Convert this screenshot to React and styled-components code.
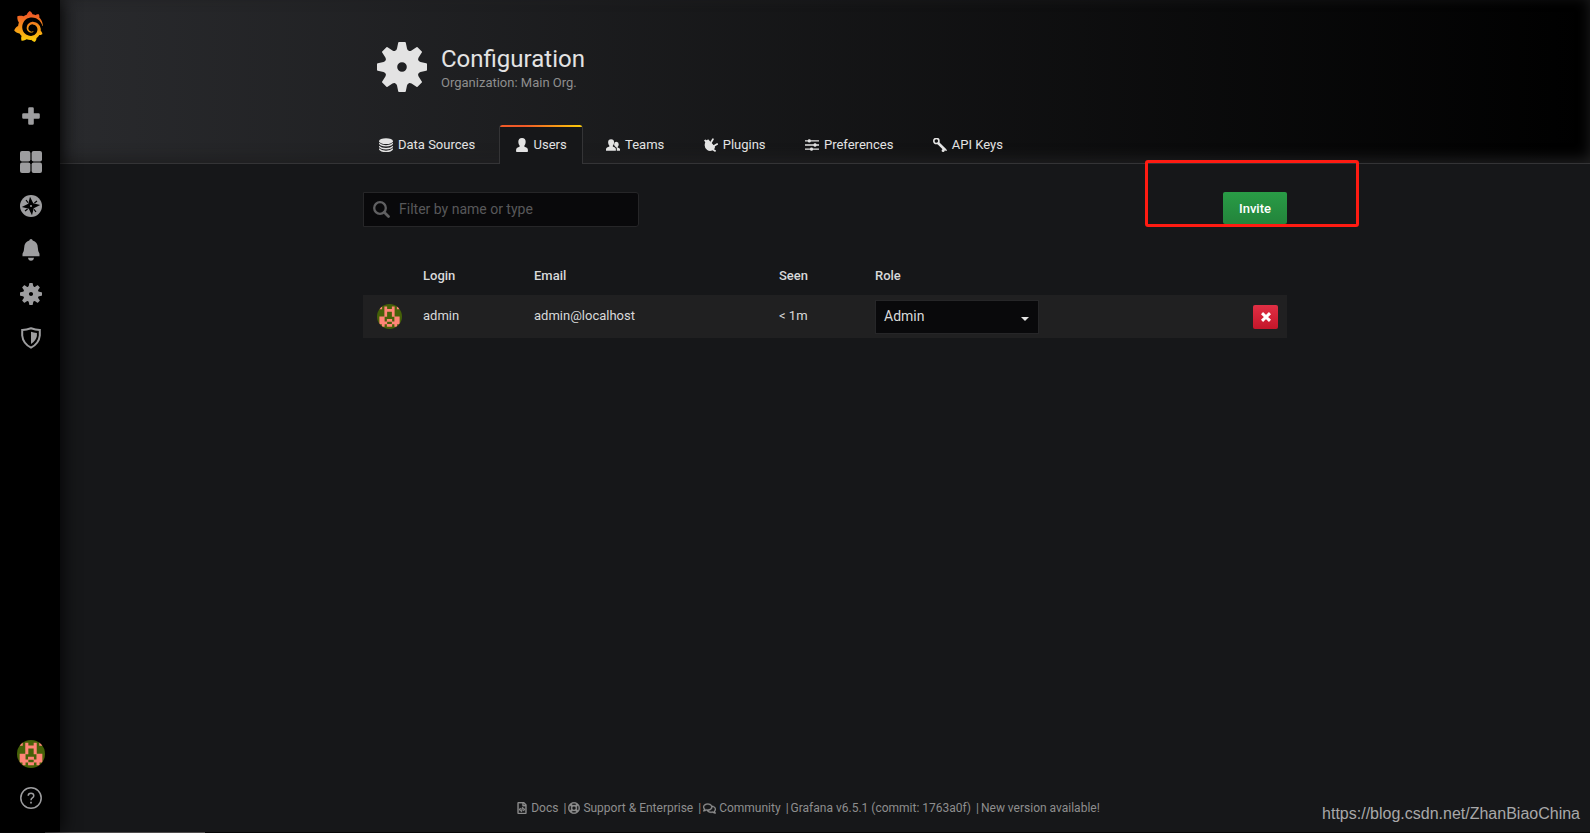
import styled, { createGlobalStyle, css } from "styled-components";
import { SiGrafana } from "react-icons/si";
import { FaRegFileCode, FaRegLifeRing, FaRegComments } from "react-icons/fa";

const GlobalStyle = createGlobalStyle`
  * {
    box-sizing: border-box;
  }
  body {
    margin: 0;
    background: #161719;
    color: #d8d9da;
    font-family: Roboto, "Liberation Sans", sans-serif;
    font-size: 13px;
    line-height: 20px;
    overflow: hidden;
  }
`;

const Page = styled.div`
  display: grid;
  grid-template-rows: 1fr 1px;
  height: 833px;
`;
const Shell = styled.div`
  display: flex;
  min-height: 0;
`;
const BottomEdge = styled.div`
  padding-left: 45px;
  background: #060607;

  &::before {
    content: "";
    display: block;
    width: 160px;
    height: 1px;
    background: #4d4b4c;
  }
`;

const Sidebar = styled.nav`
  position: relative;
  z-index: 1;
  display: flex;
  flex-direction: column;
  flex: none;
  width: 60px;
  padding: 11px 0 12px;
  background: #000;
  box-shadow: 0 0 20px #000;
  color: #9d9d9f;
`;
const Brand = styled.div`
  height: 85px;
  padding-left: 13px;

  svg {
    display: block;
  }
`;
const SideItem = styled.a`
  display: flex;
  align-items: center;
  justify-content: center;
  width: 62px;
  height: 44px;
  margin-top: ${({ $last }) => ($last ? "auto" : 0)};
`;

const Main = styled.main`
  display: flex;
  flex-direction: column;
  flex: 1;
  min-width: 0;
`;
const Container = styled.div`
  width: 924px;
  margin: 0 auto;
`;

const Header = styled.header`
  height: 164px;
  border-bottom: 1px solid #343436;
  background: linear-gradient(90deg, #292a2d, black);
  box-shadow: inset 0 -4px 14px #1f1f20;
  color: #e3e3e3;
`;
const Heading = styled.div`
  display: flex;
  height: 125px;
  padding: 42px 0 0 14px;
  gap: 14px;
`;
const Title = styled.h1`
  margin: 3px 0 0;
  font-size: 24px;
  font-weight: 400;
  line-height: 29px;
`;
const SubTitle = styled.div`
  color: #8e8e8e;
  line-height: 18px;
`;
const Tabs = styled.div`
  display: flex;
  gap: 7.4px;
`;
const Tab = styled.a`
  display: flex;
  align-items: center;
  height: 39px;
  padding: 0 15px 1px;
  border: 1px solid transparent;
  border-bottom: 0;
  border-radius: 3px 3px 0 0;

  svg {
    width: 14px;
    height: 14px;
    margin-right: 5px;
  }

  ${({ $active }) =>
    $active &&
    css`
      border-color: #343436;
      border-top: 0;
      padding-top: 1px;
      background: linear-gradient(to right, #f05a28 30%, #fbca0a 99%) top / 100% 2px no-repeat #161719;
    `}
`;

const Toolbar = styled.div`
  display: flex;
  justify-content: space-between;
  align-items: flex-start;
  margin-top: 28px;
`;
const Filter = styled.label`
  display: flex;
  align-items: center;
  width: 276px;
  height: 35px;
  padding-left: 9px;
  gap: 9px;
  border: 1px solid #262628;
  border-radius: 0 3px 3px 0;
  background: #09090b;
  color: #606062;

  input {
    flex: 1;
    min-width: 0;
    padding: 0 0 2px;
    border: 0;
    outline: 0;
    background: none;
    color: #d8d9da;
    font: 14px Roboto, sans-serif;
  }
  input::placeholder {
    color: #58585a;
    opacity: 1;
  }
`;
const Button = styled.button`
  display: flex;
  align-items: center;
  justify-content: center;
  width: ${({ $danger }) => ($danger ? "25px" : "64px")};
  height: ${({ $danger }) => ($danger ? "24px" : "32px")};
  padding: 0;
  border: 0;
  border-radius: 2px;
  background: ${({ $danger }) =>
    $danger ? "linear-gradient(#e02f44, #c4162a)" : "linear-gradient(#299c46, #23843b)"};
  color: #fff;
  font: 500 13px Roboto, sans-serif;
`;

const Table = styled.div`
  margin-top: 38px;
`;
const Row = styled.div`
  display: grid;
  grid-template-columns: 60px 111px 245px 96px 1fr 25px;
  align-items: center;
  height: ${({ $head }) => ($head ? "30px" : "43px")};
  padding-right: 9px;
  padding-bottom: ${({ $head }) => ($head ? "6px" : 0)};
  background: ${({ $head }) => ($head ? "none" : "#202021")};
  font-weight: ${({ $head }) => ($head ? 500 : 400)};
`;
const Cell = styled.div`
  padding-bottom: 2px;
`;
const AvatarCell = styled.div`
  display: flex;
  padding-left: 14px;
`;
const Select = styled.div`
  display: flex;
  align-items: center;
  justify-content: space-between;
  width: 164px;
  height: 34px;
  padding: 0 9px 1px 8px;
  border: 1px solid #262628;
  background: #09090b;
  font-size: 14px;
`;
const Caret = styled.i`
  margin-top: 5px;
  border: 4px solid transparent;
  border-top-color: #e3e3e3;
  border-bottom: 0;
`;

const Footer = styled.footer`
  display: flex;
  justify-content: center;
  margin-top: auto;
  padding: 0 34px 14px 0;
  color: #8e8e8e;
  font-size: 12px;
`;
const FooterItem = styled.a`
  display: flex;
  align-items: center;
  white-space: pre;

  svg {
    margin-right: 3px;
    stroke: currentColor;
    stroke-width: 14px;
  }
  & + &::before {
    content: "|";
    margin: 0 2px 0 5px;
  }
`;

// marker drawn on top of the page
const Highlight = styled.div`
  position: absolute;
  z-index: 2;
  top: 160px;
  left: 1145px;
  width: 214px;
  height: 67px;
  border: 3px solid #ff1b12;
  border-radius: 3px;
`;
const Watermark = styled.div`
  position: absolute;
  right: 10px;
  bottom: 9px;
  color: #a8a8a9;
  font: 16px/20px "Liberation Sans", sans-serif;
`;

const Gear = ({ size }) => (
  <svg width={size} height={size} viewBox="0 0 50 50" fill="currentColor">
    {[0, 45, 90, 135, 180, 225, 270, 315].map((angle) => (
      <path
        key={angle}
        transform={`rotate(${angle} 25 25)`}
        d="M21.2 .8Q21.3 0 22 0H28Q28.7 0 28.8 .8L30 6.5Q30.3 8 32 9L25 20L18 9Q19.7 8 20 6.5Z"
      />
    ))}
    <circle cx="25" cy="25" r="11" fill="none" stroke="currentColor" strokeWidth="12.4" />
  </svg>
);

const AVATAR_ROWS = [
  "..........",
  ".#.#..#.#.",
  "...####...",
  "...#..#...",
  "...#..#...",
  ".##....##.",
  ".##.##.##.",
  ".###..###.",
  "..#.##.#..",
  "..........",
];
// one path, overlapped by a hair so no seams show between the pixels
const AVATAR_PATH = AVATAR_ROWS.flatMap((row, y) =>
  [...row].map((c, x) => (c === "#" ? `M${x - 0.05} ${y - 0.05}h1.1v1.1h-1.1z` : ""))
).join("");

const AvatarSvg = styled.svg`
  border-radius: 50%;
  background: #456108;
`;
const Avatar = ({ size }) => (
  <AvatarSvg width={size} height={size} viewBox="0 0 10 10">
    <path d={AVATAR_PATH} fill="#ff8577" />
  </AvatarSvg>
);

const Svg = ({ size = 22, children }) => (
  <svg width={size} height={size} viewBox="0 0 22 22" fill="currentColor">
    {children}
  </svg>
);

const Logo = () => (
  <>
    <svg width="0" height="0">
      <linearGradient id="brand" x1="0" y1="0" x2="0" y2="1">
        <stop offset="0.1" stopColor="#f05a28" />
        <stop offset="0.95" stopColor="#fbca0a" />
      </linearGradient>
    </svg>
    <SiGrafana size={31} style={{ fill: "url(#brand)" }} />
  </>
);

const SIDE_ICONS = [
  <Svg>
    <path d="M8.2 1.500q0-1.300 1.300-1.300h3q1.300 0 1.300 1.300v4.700h4.700q1.300 0 1.300 1.300v3q0 1.300-1.300 1.300h-4.700v4.700q0 1.300-1.300 1.300h-3q-1.300 0-1.300-1.300v-4.700H3.500q-1.300 0-1.300-1.300v-3q0-1.300 1.300-1.300h4.700z" />
  </Svg>,
  <Svg>
    <rect width="10.4" height="10.4" rx="2" />
    <rect x="11.6" width="10.4" height="10.4" rx="2" />
    <rect y="11.6" width="10.4" height="10.4" rx="2" />
    <rect x="11.6" y="11.6" width="10.4" height="10.4" rx="2" />
  </Svg>,
  <Svg>
    <circle cx="11" cy="11" r="11" />
    <path fill="#000" d="M10 1.8L13.2 8.3 20.2 10 13.7 13.2 12 20.2 8.8 13.7 1.8 12 8.3 8.8Z" />
    <path stroke="#000" strokeWidth="1.2" d="M6 5l2 2.6M17 6l-2.6 2M16 17l-2-2.6M5 16l2.6-2" />
    <circle cx="11" cy="11" r="1" />
  </Svg>,
  <Svg>
    <path d="M11 0q1.5 0 1.7 1.6Q17.6 3 17.8 8.6q.1 4.2 1.7 6.2v2.4h-17v-2.4q1.600-2 1.700-6.200Q4.400 3 9.300 1.600 9.500 0 11 0zM8 18.800h6q-.4 2.900-3 2.900t-3-2.900z" />
  </Svg>,
  <Gear size={22} />,
  <Svg>
    <path fill="none" stroke="currentColor" strokeWidth="2" d="M11 1.300Q15.500 3 19.800 3.100V8.500Q19 16.500 11 20.700 3 16.500 2.200 8.500V3.100Q6.500 3 11 1.300Z" />
    <path d="M11 4.700Q13.500 5.700 16.900 6V9Q16.100 13.700 11 17Z" />
  </Svg>,
];

const DatabaseIcon = () => (
  <Svg>
    <ellipse cx="11" cy="5" rx="11" ry="4.600" />
    <path d="M0 7.500q4 3.700 11 3.700t11-3.700v1.700q-2 4.200-11 4.200T0 9.200zM0 12q4 3.700 11 3.700T22 12v1.700q-2 4.200-11 4.200T0 13.700zM0 16.300Q4 20 11 20t11-3.700V18q-2 4-11 4T0 18z" />
  </Svg>
);
const UserIcon = () => (
  <Svg>
    <path d="M11 0q5.800 0 5.800 6.200 0 3.500-2.300 6.300.2 1.200 1.500 1.600 4.300 1.200 4.300 4.200V21q0 1-1 1H2.700q-1 0-1-1v-2.700q0-3 4.300-4.200 1.300-.4 1.500-1.600Q5.200 9.700 5.200 6.200 5.200 0 11 0z" />
  </Svg>
);
const TeamIcon = () => (
  <Svg>
    <path d="M8 2q4.700 0 4.700 5.200 0 3-2 5v1.300q4.500 1.200 4.800 3.200V20H0v-3.300q.5-2 5.300-3.200v-1.300q-2-2-2-5Q3.300 2 8 2z" />
    <path d="M16.300 6q3.700 0 3.700 4 0 2.500-1.700 4v1q3.500.8 3.700 2.400V20h-5v-3.700q-.4-1.800-2.700-3-1.600-1.500-1.600-3.500.2-3.800 3.600-3.800z" />
  </Svg>
);
const PlugIcon = () => (
  <Svg>
    <path d="M0 4L2 2.500 4.500 3.500 6.500 2 17.500 13.800Q17 18.500 13 19.800 8.500 21.500 5 19 1 16 1 11.500 1.200 8 2 6.500Z" />
    <path fill="none" stroke="currentColor" strokeWidth="2.700" strokeLinecap="round" d="M11 7L14 2M15.500 12.500L20.700 9.500M14.500 18.500L17.500 20.300" />
  </Svg>
);
const SlidersIcon = () => (
  <Svg>
    <path stroke="currentColor" strokeWidth="2.100" d="M0 4.500h22M0 11h22M0 17.500h22" />
    <rect x="4.500" y="1.800" width="4.500" height="5.400" rx="2" />
    <rect x="13.500" y="8.300" width="4.500" height="5.400" rx="2" />
    <rect x="8" y="14.800" width="4.500" height="5.400" rx="2" />
  </Svg>
);
const KeyIcon = () => (
  <Svg>
    <circle cx="5.300" cy="4.700" r="4" fill="none" stroke="currentColor" strokeWidth="2.600" />
    <path d="M9 6L21 17.800 22 20.600 18.500 19.800 17.300 22 14 21.600 13.500 18.700 15 17.500 6.700 9.500Z" />
  </Svg>
);
const CloseIcon = () => (
  <svg width="10" height="10" viewBox="0 0 10 10" fill="none" stroke="currentColor">
    <path d="M1 1.200l8 7.600M9 1.200l-8 7.600" strokeWidth="3" />
  </svg>
);

const TABS = [
  { label: "Data Sources", icon: <DatabaseIcon /> },
  { label: "Users", icon: <UserIcon />, active: true },
  { label: "Teams", icon: <TeamIcon /> },
  { label: "Plugins", icon: <PlugIcon /> },
  { label: "Preferences", icon: <SlidersIcon /> },
  { label: "API Keys", icon: <KeyIcon /> },
];

const App = () => {
  return (
    <Page>
      <GlobalStyle />
      <Shell>
        <Sidebar>
          <Brand>
            <Logo />
          </Brand>
          {SIDE_ICONS.map((icon, i) => (
            <SideItem key={i}>{icon}</SideItem>
          ))}
          <SideItem $last>
            <Avatar size={28} />
          </SideItem>
          <SideItem>
            <svg width="22" height="22" viewBox="0 0 22 22" fill="none" stroke="currentColor">
              <circle cx="11" cy="11" r="10.200" strokeWidth="1.500" />
              <path strokeWidth="1.500" d="M8.200 8.700Q8.300 6.200 11 6.200T13.800 8.700Q13.800 10 12.400 10.900 11 11.800 11 13.300" />
              <path strokeWidth="1.700" d="M11 14.800v1.800" />
            </svg>
          </SideItem>
        </Sidebar>

        <Main>
          <Header>
            <Container>
              <Heading>
                <Gear size={50} />
                <div>
                  <Title>Configuration</Title>
                  <SubTitle>Organization: Main Org.</SubTitle>
                </div>
              </Heading>
              <Tabs>
                {TABS.map(({ label, icon, active }) => (
                  <Tab key={label} $active={active}>
                    {icon}
                    {label}
                  </Tab>
                ))}
              </Tabs>
            </Container>
          </Header>

          <Container>
            <Toolbar>
              <Filter>
                <svg width="17" height="17" viewBox="0 0 17 17" fill="none" stroke="currentColor">
                  <circle cx="7" cy="7" r="5.800" strokeWidth="2.300" />
                  <path d="M11.200 11.200l4.300 4.300" strokeWidth="2.700" strokeLinecap="round" />
                </svg>
                <input placeholder="Filter by name or type" />
              </Filter>
              <Button>Invite</Button>
            </Toolbar>
            <Table>
              <Row $head>
                <span />
                <Cell>Login</Cell>
                <Cell>Email</Cell>
                <Cell>Seen</Cell>
                <Cell>Role</Cell>
              </Row>
              <Row>
                <AvatarCell>
                  <Avatar size={25} />
                </AvatarCell>
                <Cell>admin</Cell>
                <Cell>admin@localhost</Cell>
                <Cell>&lt; 1m</Cell>
                <Select>
                  Admin
                  <Caret />
                </Select>
                <Button $danger>
                  <CloseIcon />
                </Button>
              </Row>
            </Table>
          </Container>

          <Footer>
            <FooterItem>
              <FaRegFileCode size={12} />
              Docs
            </FooterItem>
            <FooterItem>
              <FaRegLifeRing size={12} />
              Support &amp; Enterprise
            </FooterItem>
            <FooterItem>
              <FaRegComments size={13} />
              Community
            </FooterItem>
            <FooterItem>Grafana v6.5.1 (commit: 1763a0f)</FooterItem>
            <FooterItem>New version available!</FooterItem>
          </Footer>
        </Main>
      </Shell>
      <BottomEdge />
      <Highlight />
      <Watermark>https://blog.csdn.net/ZhanBiaoChina</Watermark>
    </Page>
  );
};
export default App;
